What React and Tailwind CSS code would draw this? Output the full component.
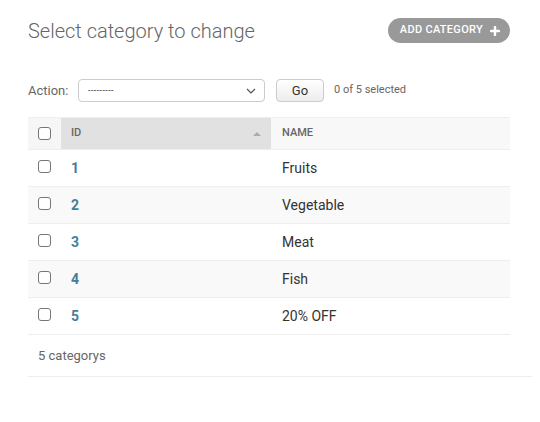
import React from 'react';

const rows = [
  { id: 1, name: 'Fruits' },
  { id: 2, name: 'Vegetable' },
  { id: 3, name: 'Meat' },
  { id: 4, name: 'Fish' },
  { id: 5, name: '20% OFF' },
];

function Box() {
  return <span className="block w-[13px] h-[13px] rounded-[3px] border border-[#767676] bg-white"></span>;
}

export default function App() {
  return (
    <div className="min-h-[422px] bg-white pl-[28px] pt-[18px] font-['Roboto',sans-serif] text-[#333]">
      <div className="flex items-center justify-between w-[482px] h-[25px]">
        <h1 className="text-[20px] font-light text-[#666] leading-none">Select category to change</h1>
        <button className="flex items-center gap-[7px] h-[25px] pl-[12px] pr-[10px] rounded-full bg-[#999] text-white text-[11px] font-medium tracking-[0.3px] uppercase">
          Add category
          <svg width="10" height="10" viewBox="0 0 10 10">
            <path d="M5 1v8M1 5h8" stroke="white" strokeWidth="2.4" strokeLinecap="round" />
          </svg>
        </button>
      </div>

      <div className="flex items-center mt-[36px] h-[23px] text-[13px]">
        <span className="text-[#666] w-[50px]">Action:</span>
        <div className="flex items-center justify-between w-[187px] h-[23px] pl-[9px] pr-[8px] border border-[#ccc] rounded-[4px] bg-white">
          <span className="text-[9px] text-[#333] tracking-[0.4px]">---------</span>
          <svg width="10" height="6" viewBox="0 0 10 6">
            <path d="M1 1l4 4 4-4" stroke="#555" strokeWidth="1.2" fill="none" />
          </svg>
        </div>
        <button className="ml-[11px] w-[48px] h-[23px] border border-[#ccc] rounded-[4px] bg-gradient-to-b from-white to-[#ededed] text-[13px] text-[#333]">Go</button>
        <span className="ml-[10px] text-[11px] text-[#666]">0 of 5 selected</span>
      </div>

      <div className="mt-[15px] w-[482px]">
        <div className="flex h-[33px] border-t border-b border-[#eee] text-[11px] font-medium uppercase text-[#666]">
          <div className="w-[33px] flex items-center justify-center bg-[#f6f6f6]"><Box /></div>
          <div className="w-[210px] flex items-center justify-between pl-[10px] pr-[10px] bg-[#e1e1e1]">
            <span>ID</span>
            <svg width="8" height="5" viewBox="0 0 8 5"><path d="M0 5L4 1 8 5z" fill="#aaa" /></svg>
          </div>
          <div className="flex-1 flex items-center pl-[11px] bg-[#f8f8f8]">Name</div>
        </div>
        {rows.map((r, i) => (
          <div key={r.id} className={`flex h-[37px] border-b border-[#eee] ${i % 2 === 1 ? 'bg-[#f9f9f9]' : 'bg-white'}`}>
            <div className="w-[33px] flex items-center justify-center pb-[3px]"><Box /></div>
            <div className="w-[210px] flex items-center pl-[10px] text-[14px] font-bold text-[#447e9b]">{r.id}</div>
            <div className="flex-1 flex items-center pl-[11px] text-[14px] text-[#333]">{r.name}</div>
          </div>
        ))}
      </div>
      <div className="w-[504px] h-[42px] flex items-center pl-[10px] border-b border-[#eee] text-[13px] text-[#666]">
        5 categorys
      </div>
    </div>
  );
}
